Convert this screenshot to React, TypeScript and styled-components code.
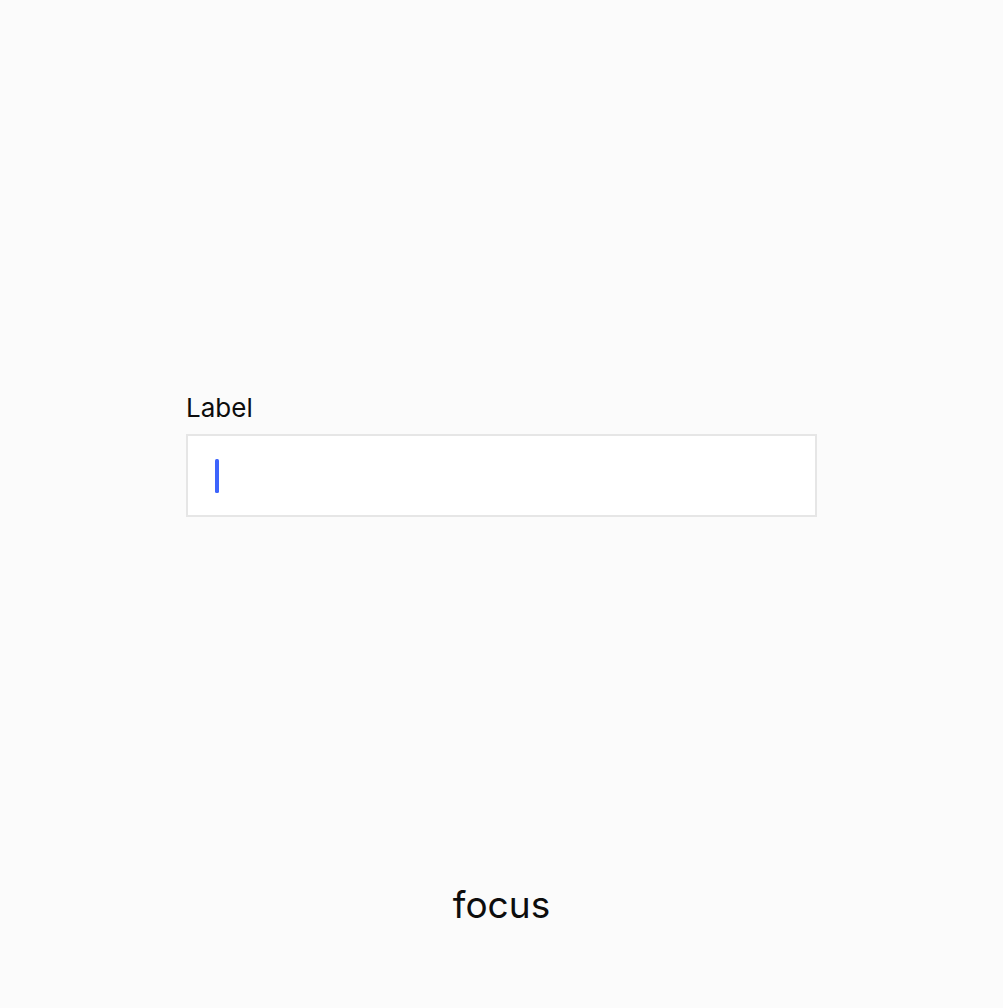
import React from "react";
import styled, { createGlobalStyle } from "styled-components";

const GlobalStyle = createGlobalStyle`
  html, body {
    margin: 0;
    padding: 0;
    background: #fbfbfb;
  }
  body {
    font-family: Inter, "Noto Sans", sans-serif;
    color: #111;
  }
`;

const Page = styled.div`
  height: 1008px;
  display: flex;
  flex-direction: column;
  background: #fbfbfb;
`;

const Stage = styled.div`
  flex: 1;
  display: flex;
  align-items: center;
  justify-content: center;
  padding-top: 25px;
`;

const Field = styled.div`
  width: 631px;
  display: flex;
  flex-direction: column;
  gap: 11px;
`;

const Label = styled.label`
  font-size: 26px;
  line-height: 30px;
  font-weight: 400;
  color: #0d0d0d;
`;

const InputBox = styled.div`
  box-sizing: border-box;
  height: 83px;
  background: #ffffff;
  border: 2px solid #e6e6e6;
  display: flex;
  align-items: center;
  padding-left: 27px;
`;

const Caret = styled.span`
  display: block;
  width: 3.5px;
  height: 34px;
  border-radius: 1.5px;
  background: #3d64fc;
`;

const Caption = styled.div`
  height: 40px;
  line-height: 40px;
  margin-bottom: 83px;
  text-align: center;
  font-size: 37px;
  color: #0d0d0d;
`;

export default function App() {
  return (
    <>
      <GlobalStyle />
      <Page>
        <Stage>
          <Field>
            <Label>Label</Label>
            <InputBox>
              <Caret />
            </InputBox>
          </Field>
        </Stage>
        <Caption>focus</Caption>
      </Page>
    </>
  );
}
